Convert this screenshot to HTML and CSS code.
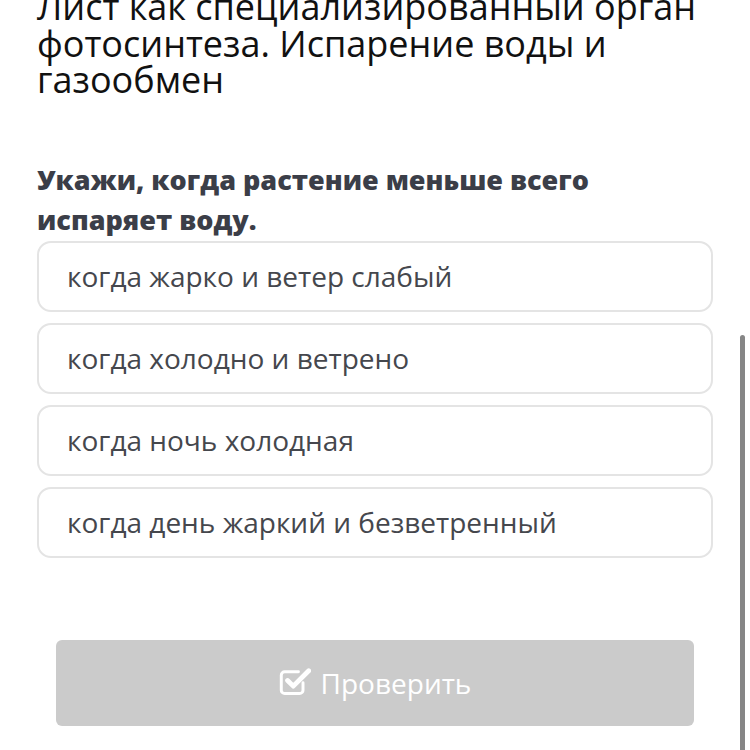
FILE: index.html
```html
<!DOCTYPE html>
<html lang="ru">
<head>
<meta charset="utf-8">
<link rel="stylesheet" href="styles.css">
</head>
<body>
<div class="page">
  <h1 class="title">Лист как специализированный орган фотосинтеза. Испарение воды и газообмен</h1>
  <p class="question">Укажи, когда растение меньше всего испаряет воду.</p>
  <div class="options">
    <div class="option">когда жарко и ветер слабый</div>
    <div class="option">когда холодно и ветрено</div>
    <div class="option">когда ночь холодная</div>
    <div class="option">когда день жаркий и безветренный</div>
  </div>
  <div class="actions">
    <button class="check" type="button">
      <svg class="check-icon" viewBox="0 0 28 28" width="32" height="32" aria-hidden="true">
        <path d="M21 15.5v6.5a3 3 0 0 1-3 3H5a3 3 0 0 1-3-3V9a3 3 0 0 1 3-3h12" fill="none" stroke="#fff" stroke-width="2.6" stroke-linecap="round" stroke-linejoin="round"/>
        <path d="M7.5 13.5l5 5L26 5" fill="none" stroke="#fff" stroke-width="4.2" stroke-linecap="round" stroke-linejoin="round"/>
      </svg>
      <span>Проверить</span>
    </button>
  </div>
</div>
<div class="scrollbar"></div>
</body>
</html>
```
FILE: styles.css
```css
html, body {
  margin: 0;
  padding: 0;
  background: #fff;
  overflow: hidden;
}
body {
  width: 750px;
  height: 750px;
  position: relative;
  font-family: "Open Sans", "Noto Sans", sans-serif;
}
.page {
  padding: 0 37px 0 37px;
  width: 676px;
}
.title {
  margin: -11px 0 0 0;
  font-size: 36px;
  font-weight: 400;
  line-height: 36.5px;
  color: #111;
}
.question {
  margin: 61px 0 0 0;
  font-size: 27px;
  font-weight: 800;
  line-height: 40px;
  color: #3b3e48;
}
.options {
  display: flex;
  flex-direction: column;
  gap: 11px;
  margin-top: 1px;
}
.option {
  height: 67px;
  border: 2px solid #e4e4e4;
  border-radius: 14px;
  padding: 0 28px;
  display: flex;
  align-items: center;
  font-size: 28px;
  color: #45474d;
}
.actions {
  padding: 82px 19px 0 19px;
}
.check {
  width: 100%;
  height: 86px;
  border: none;
  border-radius: 6px;
  background: #cbcbcb;
  color: #fff;
  font-family: inherit;
  font-size: 28px;
  display: flex;
  align-items: center;
  justify-content: center;
  gap: 10px;
}
.check-icon {
  display: block;
  margin-top: -4px;
}
.scrollbar {
  position: absolute;
  right: 5px;
  top: 335px;
  width: 5px;
  height: 420px;
  background: #868686;
  border-radius: 3px 3px 0 0;
}
```
